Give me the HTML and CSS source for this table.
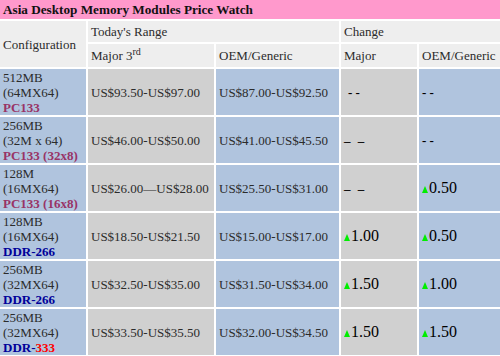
FILE: index.html
```html
<!DOCTYPE html>
<html>
<head>
<meta charset="utf-8">
<link rel="stylesheet" href="styles.css">
</head>
<body>
<table class="watch">
  <colgroup>
    <col class="c1"><col class="c2"><col class="c3"><col class="c4"><col class="c5">
  </colgroup>
  <tr class="title-row"><td colspan="5" class="title">Asia Desktop Memory Modules Price Watch</td></tr>
  <tr class="h1-row">
    <td rowspan="2" class="hd">Configuration</td>
    <td colspan="2" class="hd">Today's Range</td>
    <td colspan="2" class="hd">Change</td>
  </tr>
  <tr class="h2-row">
    <td class="hd">Major 3<sup>rd</sup></td>
    <td class="hd">OEM/Generic</td>
    <td class="hd">Major</td>
    <td class="hd">OEM/Generic</td>
  </tr>
  <tr class="data">
    <td class="blue">512MB<br>(64MX64)<br><b class="pc">PC133</b></td>
    <td class="gray">US$93.50-US$97.00</td>
    <td class="blue">US$87.00-US$92.50</td>
    <td class="gray"><span class="dash sp">- -</span></td>
    <td class="blue"><span class="dash">- -</span></td>
  </tr>
  <tr class="data">
    <td class="blue">256MB<br>(32M x 64)<br><b class="pc">PC133 (32x8)</b></td>
    <td class="gray">US$46.00-US$50.00</td>
    <td class="blue">US$41.00-US$45.50</td>
    <td class="gray"><span class="endash">– –</span></td>
    <td class="blue"><span class="dash">- -</span></td>
  </tr>
  <tr class="data">
    <td class="blue">128M<br>(16MX64)<br><b class="pc">PC133 (16x8)</b></td>
    <td class="gray">US$26.00—US$28.00</td>
    <td class="blue">US$25.50-US$31.00</td>
    <td class="gray"><span class="endash">– –</span></td>
    <td class="blue"><span class="up"></span><span class="num">0.50</span></td>
  </tr>
  <tr class="data">
    <td class="blue">128MB<br>(16MX64)<br><b class="ddr">DDR-266</b></td>
    <td class="gray">US$18.50-US$21.50</td>
    <td class="blue">US$15.00-US$17.00</td>
    <td class="gray"><span class="up"></span><span class="num">1.00</span></td>
    <td class="blue"><span class="up"></span><span class="num">0.50</span></td>
  </tr>
  <tr class="data">
    <td class="blue">256MB<br>(32MX64)<br><b class="ddr">DDR-266</b></td>
    <td class="gray">US$32.50-US$35.00</td>
    <td class="blue">US$31.50-US$34.00</td>
    <td class="gray"><span class="up"></span><span class="num">1.50</span></td>
    <td class="blue"><span class="up"></span><span class="num">1.00</span></td>
  </tr>
  <tr class="data">
    <td class="blue">256MB<br>(32MX64)<br><b class="ddr">DDR-<span class="red">333</span></b></td>
    <td class="gray">US$33.50-US$35.50</td>
    <td class="blue">US$32.00-US$34.50</td>
    <td class="gray"><span class="up"></span><span class="num">1.50</span></td>
    <td class="blue"><span class="up"></span><span class="num">1.50</span></td>
  </tr>
</table>
</body>
</html>
```

FILE: styles.css
```css
html, body {
  margin: 0;
  padding: 0;
  background: #ffffff;
}
body {
  font-family: "Liberation Serif", "Times New Roman", serif;
  font-size: 13px;
  color: #2b2b2b;
  overflow: hidden;
}
.watch {
  border-collapse: separate;
  border-spacing: 2px;
  table-layout: fixed;
  width: 504px;
  margin: -2px 0 0 -2px;
}
.c1 { width: 86px; }
.c2 { width: 126px; }
.c3 { width: 123px; }
.c4 { width: 76px; }
.c5 { width: 81px; }
.watch td {
  padding: 0 3px;
  line-height: 15px;
  vertical-align: middle;
  white-space: nowrap;
}
.title-row { height: 19px; }
.h1-row { height: 21px; }
.h2-row { height: 23px; }
.data { height: 46px; }
.title {
  background: #ff99cc;
  font-weight: bold;
  font-size: 13.2px;
  color: #111111;
}
.hd {
  background: #eeeeee;
}
.hd sup {
  font-size: 10px;
  line-height: 0;
  vertical-align: 5px;
}
.blue { background: #b0c4de; }
.gray { background: #d0d0d0; }
.pc { color: #993366; }
.ddr { color: #000099; }
.red { color: #ff0000; }
.dash {
  font-weight: bold;
  font-size: 13px;
  color: #000;
}
.dash.sp { padding-left: 4px; }
.endash {
  font-weight: bold;
  font-size: 13px;
  color: #000;
  word-spacing: 4px;
}
.up {
  display: inline-block;
  width: 0;
  height: 0;
  border-left: 3px solid transparent;
  border-right: 3px solid transparent;
  border-bottom: 7px solid #00ee00;
  margin-right: 1px;
}
.num {
  font-size: 16px;
  color: #000;
}
```
